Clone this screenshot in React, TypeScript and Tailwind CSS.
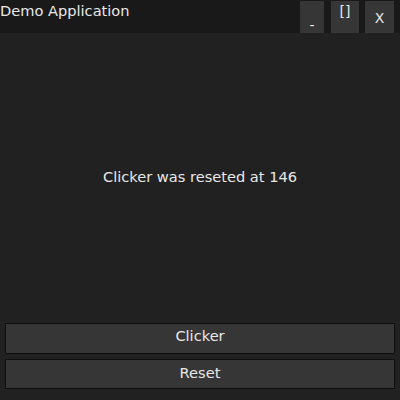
import React, { useState } from 'react';

export default function App() {
  const [count, setCount] = useState(146);
  const [message, setMessage] = useState('Clicker was reseted at 146');

  return (
    <div className="w-[400px] h-[400px] flex flex-col bg-[#212121] text-[#e8e8e8] font-['DejaVu_Sans',sans-serif] overflow-hidden">
      {/* Title bar */}
      <div className="h-[33px] flex justify-between items-start bg-[#191919]">
        <span className="text-[14.6px] leading-[22px]">Demo Application</span>
        <div className="flex mr-[6px]">
          <button className="mt-[1px] w-[24px] h-[32px] bg-[#363636] text-[14px] leading-none pt-[15px]">-</button>
          <button className="mt-[1px] ml-[7px] w-[28px] h-[32px] bg-[#363636] text-[14px] leading-none pb-[12px]">[]</button>
          <button className="mt-[1px] ml-[6px] w-[29px] h-[32px] bg-[#363636] text-[14px] leading-none pt-[1px]">X</button>
        </div>
      </div>

      {/* Content */}
      <div className="flex-1 flex items-center justify-center text-[14.6px]">
        <span className="mb-[2px]">{message}</span>
      </div>

      {/* Actions */}
      <div className="flex flex-col gap-[5px] px-[5px] pb-[11px]">
        <button
          onClick={() => {
            setCount(count + 1);
            setMessage('Clicked ' + (count + 1) + ' times');
          }}
          className="h-[31px] bg-[#363636] border border-[#0e0e0e] text-[14.6px] pb-[5px]"
        >
          Clicker
        </button>
        <button
          onClick={() => {
            setMessage('Clicker was reseted at ' + count);
            setCount(0);
          }}
          className="h-[30px] bg-[#363636] border border-[#0e0e0e] text-[14.6px] pb-[3px]"
        >
          Reset
        </button>
      </div>
    </div>
  );
}
